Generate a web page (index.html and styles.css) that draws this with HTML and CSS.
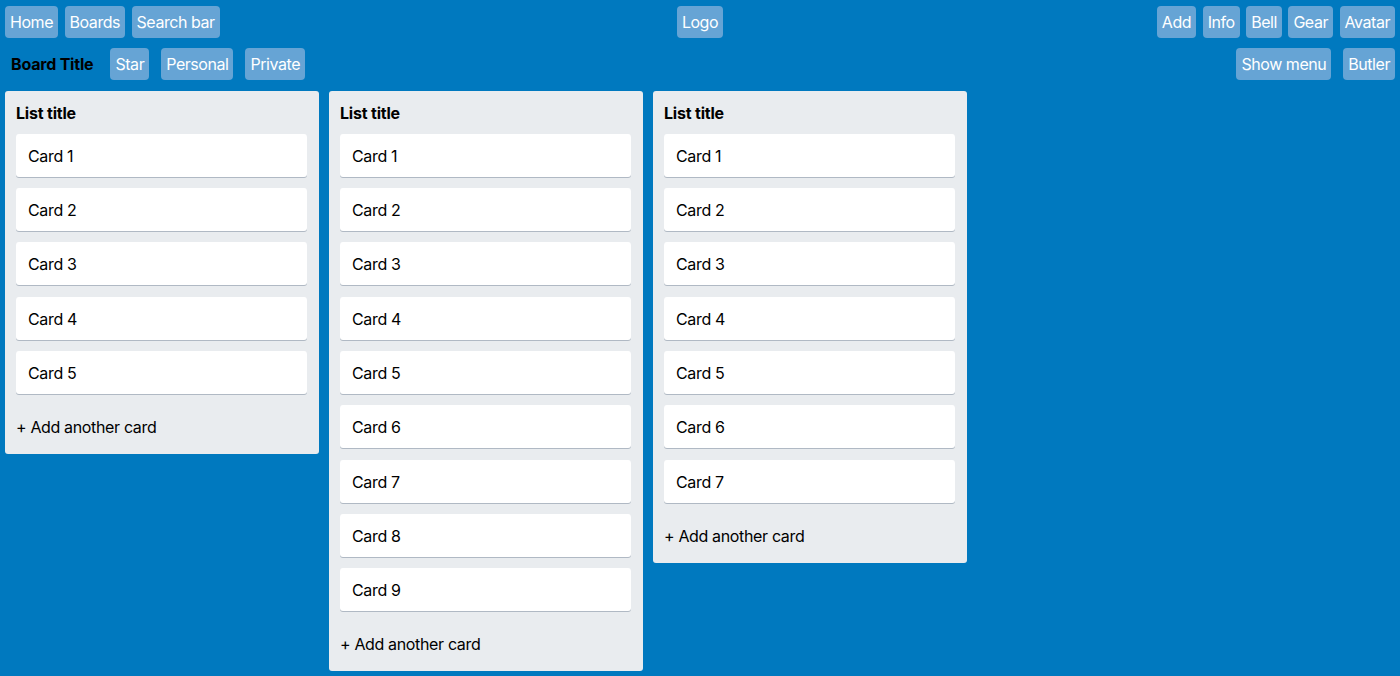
FILE: index.html
```html
<!DOCTYPE html>
<html>
<head>
<meta charset="utf-8">
<link rel="stylesheet" href="styles.css">
</head>
<body>
<nav class="topnav">
  <div class="group left">
    <span class="btn">Home</span>
    <span class="btn">Boards</span>
    <span class="btn">Search bar</span>
  </div>
  <div class="group center">
    <span class="btn">Logo</span>
  </div>
  <div class="group right">
    <span class="btn">Add</span>
    <span class="btn">Info</span>
    <span class="btn">Bell</span>
    <span class="btn">Gear</span>
    <span class="btn">Avatar</span>
  </div>
</nav>
<header class="boardbar">
  <div class="group wide">
    <span class="board-title">Board Title</span>
    <span class="btn">Star</span>
    <span class="btn">Personal</span>
    <span class="btn">Private</span>
  </div>
  <div class="group wide">
    <span class="btn">Show menu</span>
    <span class="btn">Butler</span>
  </div>
</header>
<main class="lists">
  <section class="list">
    <h2 class="list-title">List title</h2>
    <div class="card">Card 1</div>
    <div class="card">Card 2</div>
    <div class="card">Card 3</div>
    <div class="card">Card 4</div>
    <div class="card">Card 5</div>
    <div class="add">+ Add another card</div>
  </section>
  <section class="list">
    <h2 class="list-title">List title</h2>
    <div class="card">Card 1</div>
    <div class="card">Card 2</div>
    <div class="card">Card 3</div>
    <div class="card">Card 4</div>
    <div class="card">Card 5</div>
    <div class="card">Card 6</div>
    <div class="card">Card 7</div>
    <div class="card">Card 8</div>
    <div class="card">Card 9</div>
    <div class="add">+ Add another card</div>
  </section>
  <section class="list">
    <h2 class="list-title">List title</h2>
    <div class="card">Card 1</div>
    <div class="card">Card 2</div>
    <div class="card">Card 3</div>
    <div class="card">Card 4</div>
    <div class="card">Card 5</div>
    <div class="card">Card 6</div>
    <div class="card">Card 7</div>
    <div class="add">+ Add another card</div>
  </section>
</main>
</body>
</html>
```
FILE: styles.css
```css
* { box-sizing: border-box; }
html, body {
  margin: 0;
  height: 100%;
}
body {
  background: #0079bf;
  font-family: Inter, "Noto Sans", "Liberation Sans", sans-serif;
  font-size: 16px;
  color: #172b4d;
  overflow: hidden;
}
.topnav {
  display: grid;
  grid-template-columns: 1fr auto 1fr;
  align-items: center;
  padding: 6px 5px 0;
}
.group {
  display: flex;
  align-items: center;
  gap: 6.5px;
}
.group.wide { gap: 12px; }
.right { justify-content: flex-end; }
.btn {
  display: inline-block;
  height: 31.5px;
  line-height: 33px;
  padding: 0 5px;
  border-radius: 4px;
  background: #66a4d5;
  color: #fff;
  white-space: nowrap;
  letter-spacing: -0.45px;
}
.boardbar {
  display: flex;
  justify-content: space-between;
  align-items: center;
  padding: 10.5px 5px 0;
}
.board-title {
  font-weight: 700;
  color: #000;
  padding: 0 5px 0 6px;
  letter-spacing: -0.2px;
}
.lists {
  display: flex;
  align-items: flex-start;
  gap: 10px;
  padding: 11px 5px 0;
}
.list {
  width: 314px;
  background: #e9ecef;
  border-radius: 3px;
  padding: 12px 12px 7px 11px;
  display: flex;
  flex-direction: column;
  gap: 11.3px;
}
.list-title {
  margin: 0;
  font-size: 16px;
  line-height: 20px;
  font-weight: 700;
  color: #000;
  letter-spacing: -0.2px;
}
.card {
  background: #fff;
  border-radius: 3px;
  padding: 12px 12px 11px;
  line-height: 20px;
  color: #000;
  box-shadow: 0 1px 0 rgba(9, 30, 66, 0.25);
  letter-spacing: -0.35px;
}
.add {
  padding: 12px 0 10px;
  line-height: 20px;
  color: #000;
  letter-spacing: -0.35px;
}
```
